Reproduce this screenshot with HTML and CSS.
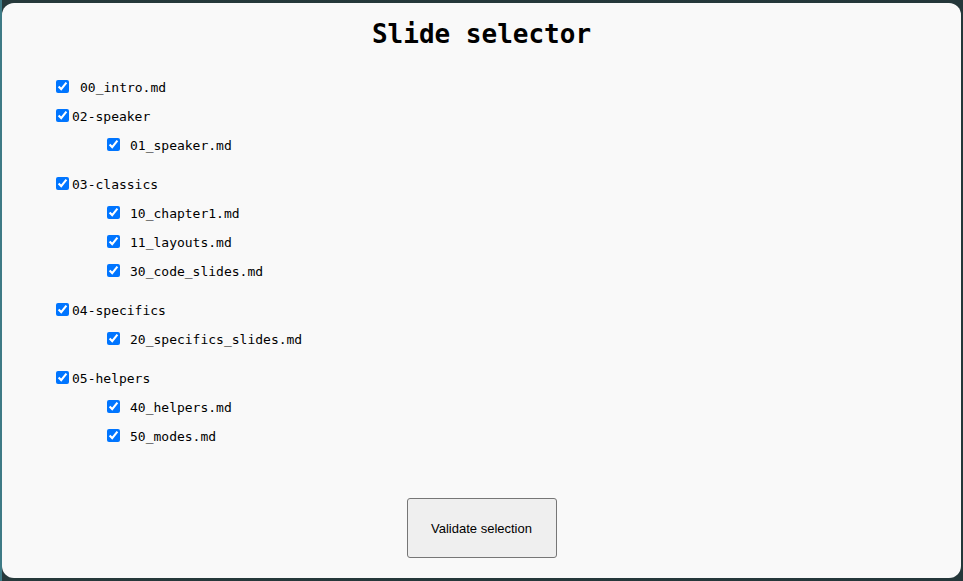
FILE: index.html
```html
<!DOCTYPE html>
<html lang="en">
<head>
<meta charset="utf-8">
<title>Slide selector</title>
<link rel="stylesheet" href="styles.css">
</head>
<body>
<div class="dialog">
  <h1 class="title">Slide selector</h1>
  <div class="tree">
    <label class="row top-file"><input type="checkbox" checked><span class="name">00_intro.md</span></label>

    <div class="group">
      <label class="row group-head"><input type="checkbox" checked><span class="name">02-speaker</span></label>
      <label class="row child"><input type="checkbox" checked><span class="name">01_speaker.md</span></label>
    </div>

    <div class="group">
      <label class="row group-head"><input type="checkbox" checked><span class="name">03-classics</span></label>
      <label class="row child"><input type="checkbox" checked><span class="name">10_chapter1.md</span></label>
      <label class="row child"><input type="checkbox" checked><span class="name">11_layouts.md</span></label>
      <label class="row child"><input type="checkbox" checked><span class="name">30_code_slides.md</span></label>
    </div>

    <div class="group">
      <label class="row group-head"><input type="checkbox" checked><span class="name">04-specifics</span></label>
      <label class="row child"><input type="checkbox" checked><span class="name">20_specifics_slides.md</span></label>
    </div>

    <div class="group">
      <label class="row group-head"><input type="checkbox" checked><span class="name">05-helpers</span></label>
      <label class="row child"><input type="checkbox" checked><span class="name">40_helpers.md</span></label>
      <label class="row child"><input type="checkbox" checked><span class="name">50_modes.md</span></label>
    </div>
  </div>
  <div class="actions">
    <button class="validate" type="button">Validate selection</button>
  </div>
</div>
</body>
</html>
```

FILE: styles.css
```css
html, body {
  margin: 0;
  height: 100%;
}

body {
  box-sizing: border-box;
  padding: 3px 2px 3px 2px;
  display: flex;
  flex-direction: column;
  background: linear-gradient(to right, #3e7b86 0, #3e7b86 2px, #26393b 2px, #24373a 100%);
}

.dialog {
  flex: 1;
  display: flex;
  flex-direction: column;
  background: #f9f9f9;
  border-radius: 12px;
  padding: 16px 0 20px 0;
  box-sizing: border-box;
}

.title {
  margin: 0;
  text-align: center;
  font-family: "DejaVu Sans Mono", monospace;
  font-weight: bold;
  font-size: 26px;
  line-height: 30px;
  color: #000;
}

.tree {
  margin-top: 23px;
  padding-left: 54px;
  display: flex;
  flex-direction: column;
}

.row {
  height: 29px;
  display: flex;
  align-items: center;
  font-family: "DejaVu Sans Mono", monospace;
  font-size: 13px;
  color: #000;
}

.row input {
  margin: 0 0 1px 0;
  width: 13px;
  height: 13px;
  accent-color: #0075ff;
}

.name {
  padding-top: 2px;
}

.top-file {
  gap: 11px;
}

.group-head {
  gap: 3px;
}

.child {
  padding-left: 51px;
  gap: 10px;
}

.group {
  display: flex;
  flex-direction: column;
  margin-bottom: 10px;
}

.actions {
  margin-top: auto;
  display: flex;
  justify-content: center;
}

.validate {
  width: 150px;
  height: 60px;
  font-family: "Liberation Sans", Arial, sans-serif;
  font-size: 13px;
  color: #000;
  background: #efefef;
  border: 1px solid #767676;
  border-radius: 3px;
}
```
